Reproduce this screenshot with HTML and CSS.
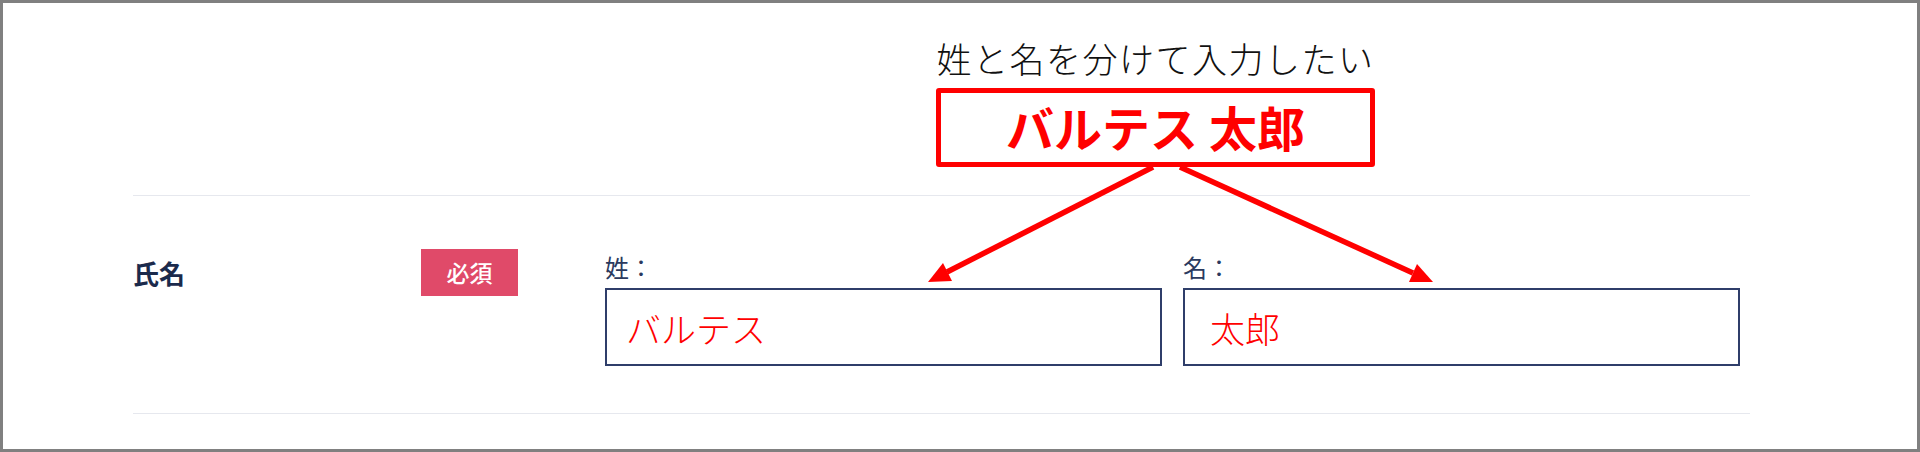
FILE: index.html
```html
<!DOCTYPE html>
<html lang="ja">
  <head>
    <meta charset="UTF-8" />
    <meta name="viewport" content="width=device-width, initial-scale=1.0" />
    <title>氏名入力</title>
    <link rel="stylesheet" href="styles.css">
  </head>
  <body>
    <div class="frame">
      <!-- Annotation -->
      <div class="note">
        <p class="note-caption">姓と名を分けて入力したい</p>
        <div class="note-box">バルテス 太郎</div>
      </div>

      <!-- Form row -->
      <div class="form">
        <div class="form-row">
          <div class="form-head">
            <span class="form-title">氏名</span>
            <span class="badge">必須</span>
          </div>
          <div class="fields">
            <div class="field">
              <label for="last-name">姓：</label>
              <input type="text" id="last-name" value="バルテス" />
            </div>
            <div class="field">
              <label for="first-name">名：</label>
              <input type="text" id="first-name" class="wide-pad" value="太郎" />
            </div>
          </div>
        </div>
      </div>

      <!-- Arrows -->
      <svg class="arrows" width="1920" height="452" viewBox="0 0 1920 452">
        <line x1="1153" y1="167" x2="947" y2="272" />
        <polygon points="928,282 952,281 943,263" />
        <line x1="1180" y1="167" x2="1413" y2="273" />
        <polygon points="1433,282 1409,282 1417,264" />
      </svg>
    </div>
  </body>
</html>
```

FILE: styles.css
```css
/* General Styles */
body {
  margin: 0;
  font-family: "Noto Sans CJK JP", "Noto Sans", sans-serif;
  background: #ffffff;
}

.frame {
  position: relative;
  width: 1920px;
  height: 452px;
  box-sizing: border-box;
  border: 3px solid #808080;
  background: #ffffff;
  padding-left: 130px;
  overflow: hidden;
}

/* Annotation */
.note {
  margin-left: 803px;
  width: 439px;
  padding-top: 33px;
  display: flex;
  flex-direction: column;
  align-items: center;
}

.note-caption {
  margin: 0;
  font-size: 35px;
  font-weight: 300;
  line-height: 44px;
  letter-spacing: 1.5px;
  color: #111111;
  white-space: nowrap;
}

.note-box {
  margin-top: 8px;
  width: 439px;
  height: 79px;
  box-sizing: border-box;
  border: 5px solid #ff0000;
  border-radius: 3px;
  text-align: center;
  font-size: 48px;
  font-weight: 700;
  line-height: 67px;
  color: #ff0000;
}

/* Form */
.form {
  margin-top: 28px;
  width: 1617px;
  border-top: 1px solid #e6e8ee;
  border-bottom: 1px solid #e6e8ee;
}

.form-row {
  height: 217px;
  box-sizing: border-box;
  padding-top: 53px;
  display: flex;
  align-items: flex-start;
}

.form-head {
  width: 385px;
  display: flex;
  align-items: center;
}

.form-title {
  width: 288px;
  font-size: 26px;
  font-weight: 700;
  line-height: 47px;
  color: #1b2a4c;
}

.badge {
  width: 97px;
  height: 47px;
  background: #e04a69;
  color: #ffffff;
  font-size: 23px;
  font-weight: 500;
  line-height: 47px;
  text-align: center;
}

.fields {
  margin-left: 87px;
  margin-top: 3px;
  display: flex;
  gap: 21px;
}

.field {
  width: 557px;
  display: flex;
  flex-direction: column;
}

.field label {
  font-size: 24px;
  line-height: 30px;
  color: #2b3a5e;
}

.field input {
  margin-top: 6px;
  width: 100%;
  height: 78px;
  box-sizing: border-box;
  border: 2px solid #2f3e6a;
  border-radius: 0;
  padding: 0 0 0 19px;
  font-family: "Noto Sans CJK JP", "Noto Sans", sans-serif;
  font-size: 35px;
  font-weight: 300;
  color: #ff0000;
  background: #ffffff;
  outline: none;
}

.field input.wide-pad {
  padding-left: 25px;
}

/* Arrows */
.arrows {
  position: absolute;
  top: -3px;
  left: -3px;
  pointer-events: none;
}

.arrows line {
  stroke: #ff0000;
  stroke-width: 5.5;
}

.arrows polygon {
  fill: #ff0000;
}
```
